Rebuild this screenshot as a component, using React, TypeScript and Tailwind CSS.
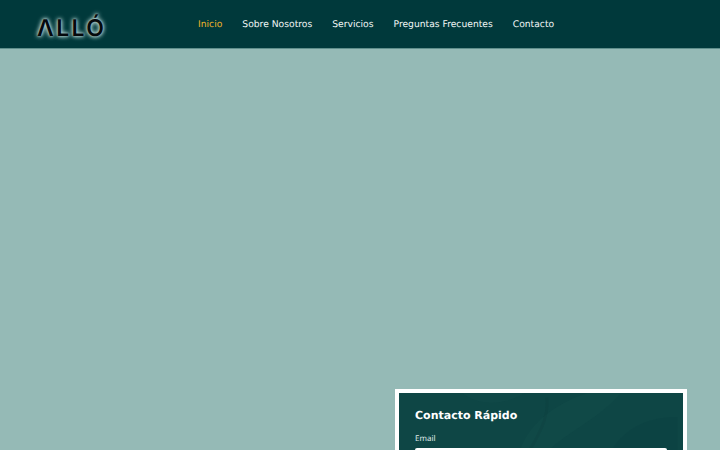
const links = ["Sobre Nosotros", "Servicios", "Preguntas Frecuentes", "Contacto"];

// faint foliage texture behind the contact card
function CardTexture() {
  return (
    <svg className="absolute inset-0 h-full w-full" viewBox="0 0 284 200" fill="none" aria-hidden="true">
      <path d="M120 60 C130 30 160 10 190 0 L225 0 C205 25 170 40 150 60 Z" fill="#1a5552" opacity="0.2" />
      <path d="M60 0 C75 12 100 15 125 0 Z" fill="#1a5552" opacity="0.18" />
      <path d="M215 60 C230 35 255 25 284 25 L284 60 Z" fill="#08393a" opacity="0.15" />
      <path d="M130 60 C145 35 150 20 148 5" stroke="#0a3d3d" strokeWidth="3" opacity="0.25" />
    </svg>
  );
}

export default function App() {
  return (
    <div className="flex h-[450px] w-[720px] flex-col overflow-hidden bg-[#95bab6] font-['DejaVu_Sans',sans-serif] [text-rendering:geometricPrecision]">
      <header className="flex h-[49px] shrink-0 items-center border-b border-b-[#5f8f8c] bg-[#00393b] pl-[37px]">
        <div className="mt-[9px] w-[161px] font-['Inter',sans-serif] text-[23px] leading-none font-semibold tracking-[2.4px] text-[#05090c] [text-shadow:0_0_5px_#b5d4d2,0_0_4px_#b5d4d2,0_0_2px_#b5d4d2]">
          ΛLLÓ
        </div>
        <nav className="mt-[1px] flex gap-[20px] text-[9.2px] text-[#f2f7f6]">
          <a className="text-[#f0b429]">Inicio</a>
          {links.map((l) => (
            <a key={l}>{l}</a>
          ))}
        </nav>
      </header>
      <main className="flex flex-1 justify-end pt-[340px] pr-[33px]">
        <section className="relative h-[200px] w-[292px] shrink-0 border-4 border-white bg-[#0e4645] px-[16px] pt-[15px]">
          <CardTexture />
          <div className="relative">
            <h2 className="text-[11px] leading-[16px] font-bold text-white">Contacto Rápido</h2>
            <label className="mt-[8px] block font-['Noto_Sans',sans-serif] text-[8px] leading-[14px] text-[#dfe9e8]">Email</label>
            <div className="mt-[2px] h-[30px] w-full rounded-[2px] bg-white" />
          </div>
        </section>
      </main>
    </div>
  );
}
